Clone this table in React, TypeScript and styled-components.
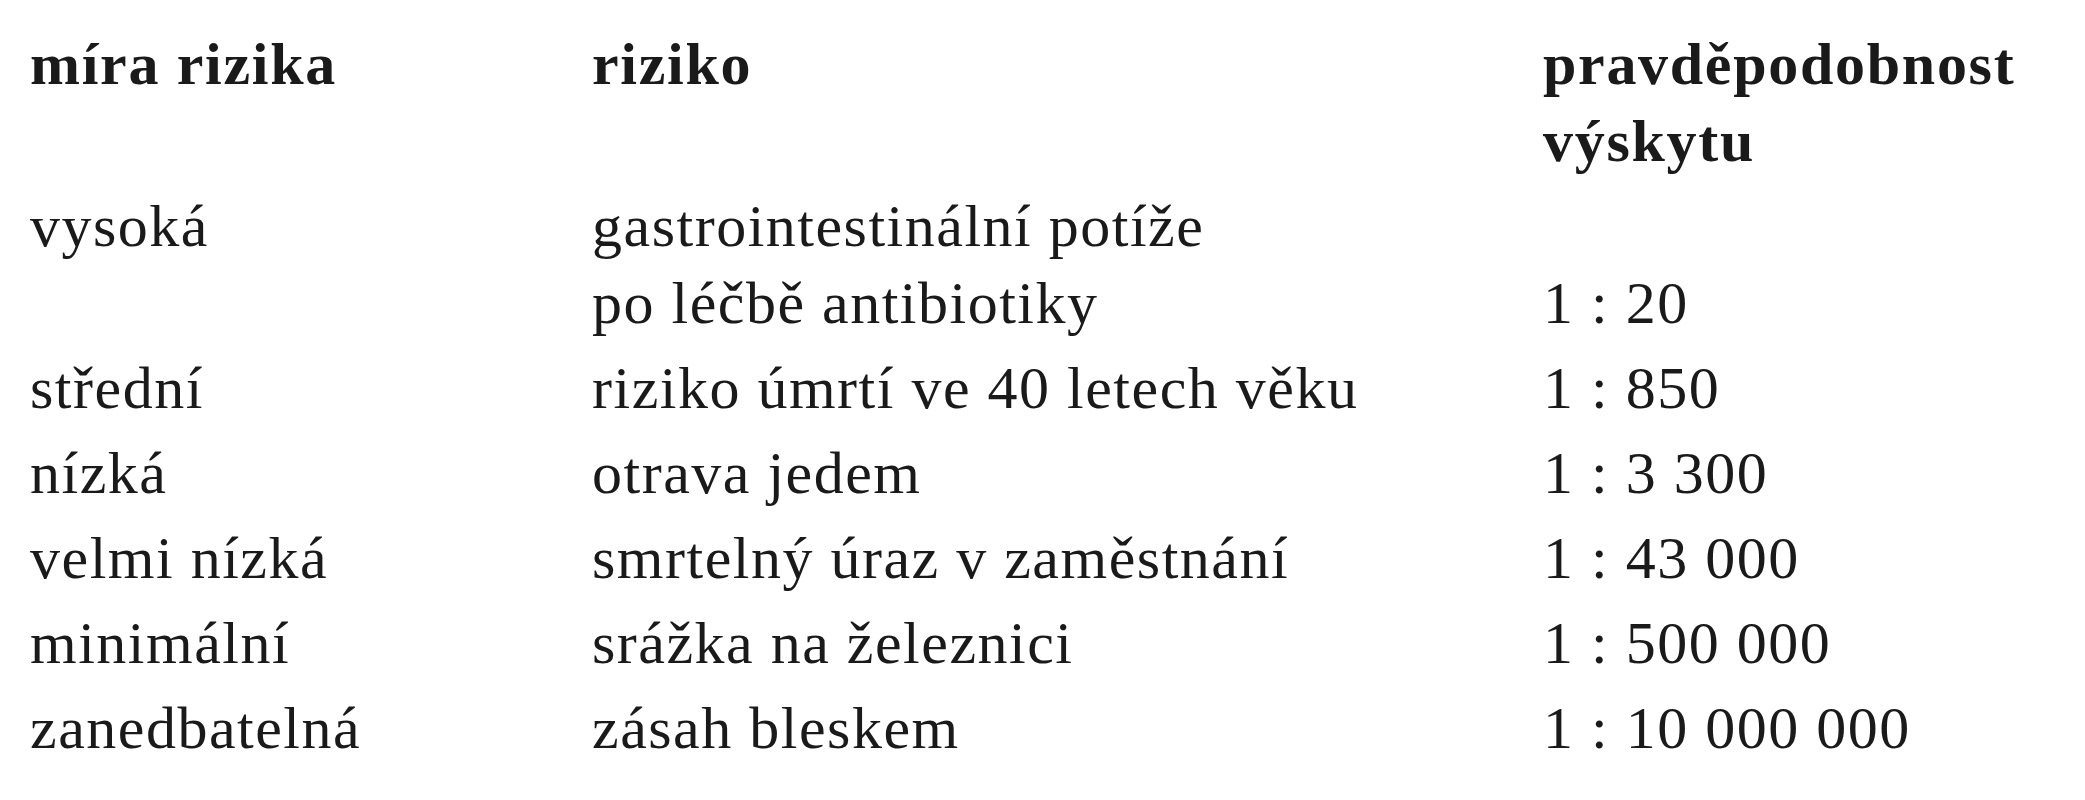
import * as React from 'react';
import styled, { createGlobalStyle } from 'styled-components';

const GlobalStyle = createGlobalStyle`
  html, body {
    margin: 0;
    padding: 0;
    background: #ffffff;
  }
`;

const _Table = styled.div`
  width: 2085px;
  height: 800px;
  box-sizing: border-box;
  padding: 26px 0 0 30px;
  background: #ffffff;
  color: #1a1a1a;
  font-family: "Liberation Serif", "Times New Roman", serif;
  font-size: 60px;
  line-height: 77px;
  letter-spacing: 1.5px;
`;

const Row = styled.div`
  display: grid;
  grid-template-columns: 562px 951px 1fr;
  padding-bottom: 8px;
`;

const HeadCell = styled.div`
  font-weight: 700;
  letter-spacing: 1.7px;
`;

const Cell = styled.div<{ $bottom?: boolean }>`
  align-self: ${props => (props.$bottom ? 'end' : 'start')};
  white-space: nowrap;
`;

type RiskRow = {
  level: string;
  risk: string[];
  odds: string;
};

const rows: RiskRow[] = [
  { level: 'vysoká', risk: ['gastrointestinální potíže', 'po léčbě antibiotiky'], odds: '1 : 20' },
  { level: 'střední', risk: ['riziko úmrtí ve 40 letech věku'], odds: '1 : 850' },
  { level: 'nízká', risk: ['otrava jedem'], odds: '1 : 3 300' },
  { level: 'velmi nízká', risk: ['smrtelný úraz v zaměstnání'], odds: '1 : 43 000' },
  { level: 'minimální', risk: ['srážka na železnici'], odds: '1 : 500 000' },
  { level: 'zanedbatelná', risk: ['zásah bleskem'], odds: '1 : 10 000 000' },
];

const App = () => {
  return (
    <>
      <GlobalStyle />
      <_Table>
        <Row>
          <HeadCell>míra rizika</HeadCell>
          <HeadCell>riziko</HeadCell>
          <HeadCell>pravděpodobnost<br />výskytu</HeadCell>
        </Row>
        {rows.map(row => (
          <Row key={row.level}>
            <Cell>{row.level}</Cell>
            <Cell>
              {row.risk.map(line => <div key={line}>{line}</div>)}
            </Cell>
            <Cell $bottom={row.risk.length > 1}>{row.odds}</Cell>
          </Row>
        ))}
      </_Table>
    </>
  );
};

export default App;
